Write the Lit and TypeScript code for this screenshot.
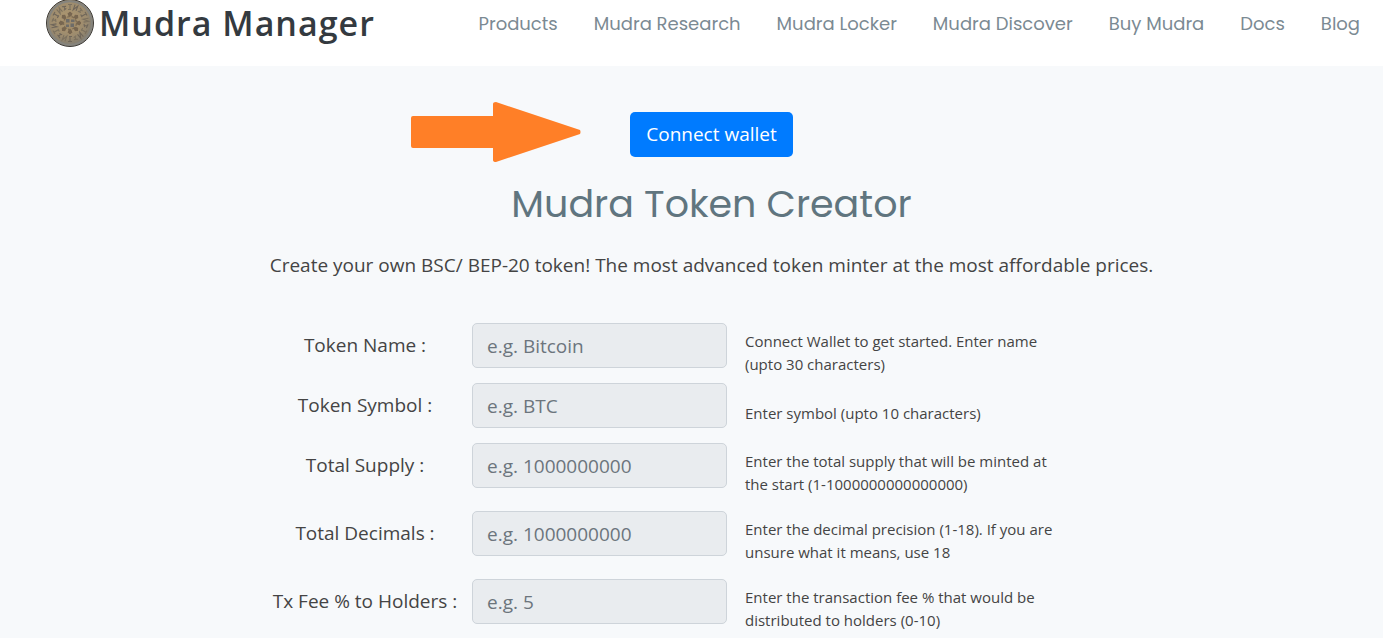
import { LitElement, html, css, svg } from "lit";
import { customElement } from "lit/decorators.js";

interface Field {
  id: string;
  label: string;
  placeholder: string;
  hint: string;
  spaced?: boolean;
}

const LINKS = ["Products", "Mudra Research", "Mudra Locker", "Mudra Discover", "Buy Mudra", "Docs", "Blog"];

const FIELDS: Field[] = [
  { id: "name", label: "Token Name :", placeholder: "e.g. Bitcoin", hint: "Connect Wallet to get started. Enter name (upto 30 characters)" },
  { id: "symbol", label: "Token Symbol :", placeholder: "e.g. BTC", hint: "Enter symbol (upto 10 characters)" },
  { id: "supply", label: "Total Supply :", placeholder: "e.g. 1000000000", hint: "Enter the total supply that will be minted at the start (1-1000000000000000)", spaced: true },
  { id: "decimals", label: "Total Decimals :", placeholder: "e.g. 1000000000", hint: "Enter the decimal precision (1-18). If you are unsure what it means, use 18", spaced: true },
  { id: "fee", label: "Tx Fee % to Holders :", placeholder: "e.g. 5", hint: "Enter the transaction fee % that would be distributed to holders (0-10)", spaced: true },
];

@customElement("mudra-coin")
class MudraCoin extends LitElement {
  static styles = css`
    :host { display: block; flex: none; }
    svg { display: block; }
  `;
  render() {
    const rim = Array.from({ length: 18 }, (_, i) => svg`
      <g transform="rotate(${i * 20} 24 24)">
        <path d=${i % 3 === 0 ? "M22 5.5h4M24 5.5v5M22 10.5h3" : i % 3 === 1 ? "M22.5 5v5.5l3-5v5" : "M22 6l4 1M22.5 10l3-1M24 6v4"}
          fill="none" stroke=${i % 2 ? "#6f665a" : "#7c715f"} stroke-width="1.1" />
      </g>`);
    const petals = Array.from({ length: 8 }, (_, i) => svg`
      <path transform="rotate(${i * 45} 24 24)" d="M21 14.5l3-2.500 3 2.500-1.500 3.500h-3z" fill="#776650" stroke="#ab9672" stroke-width=".8" />`);
    return html`<svg width="48" height="48" viewBox="0 0 48 48" aria-hidden="true">
      <defs>
        <radialGradient id="face" cx="45%" cy="40%" r="65%">
          <stop offset="0" stop-color="#ad9770" />
          <stop offset=".6" stop-color="#9c8b6e" />
          <stop offset="1" stop-color="#77756f" />
        </radialGradient>
      </defs>
      <circle cx="24" cy="24" r="23.5" fill="url(#face)" stroke="#3c3a37" />
      <circle cx="24" cy="24" r="21.8" fill="none" stroke="#85847e" stroke-width="2" />
      ${rim}
      ${petals}
      <circle cx="24" cy="24" r="6.5" fill="#a18c6a" stroke="#7b6a52" stroke-dasharray="3 1.5" stroke-width="1.2" />
      <path d="M20 20h3.500v3.500h-3.500zM25 20.500h3.500v2.500h-3.500zM20 25.500h3v2.500h-3zM24.500 24.500h3.500v3.500h-3.500z" fill="#6e6c68" />
    </svg>`;
  }
}

@customElement("app-root")
class AppRoot extends LitElement {
  static styles = css`
    :host {
      display: block;
      min-height: 100vh;
      overflow: hidden;
      background: #f7f9fb;
      color: #444;
      font-family: "Open Sans", sans-serif;
      font-size: 19px;
      line-height: 29px;
    }
    * { box-sizing: border-box; }
    .bar {
      display: flex;
      align-items: center;
      justify-content: space-between;
      padding: 0 23px 20px 46px;
      height: 66px;
      background: #fff;
    }
    .brand {
      display: flex;
      align-items: center;
      gap: 5px;
      color: #343a40;
      font-size: 34px;
      line-height: 46px;
      font-weight: 600;
      letter-spacing: 1px;
      text-decoration: none;
      white-space: nowrap;
    }
    .links { display: flex; gap: 36px; white-space: nowrap; }
    .link {
      color: #7b8a93;
      font-family: Poppins, Inter, sans-serif;
      font-size: 18px;
      text-decoration: none;
    }
    .page {
      display: flex;
      flex-direction: column;
      align-items: center;
      padding: 46px 0 0 40px;
    }
    .action { position: relative; }
    .arrow { position: absolute; right: 212px; top: -10px; }
    .connect {
      display: block;
      padding: 8px 16px;
      border: 0;
      border-radius: 5px;
      background: #007bff;
      color: #fff;
      font: inherit;
    }
    .title {
      margin: 23px 0 0;
      color: #60757f;
      font-family: Poppins, Inter, sans-serif;
      font-size: 38px;
      line-height: 48px;
      font-weight: 400;
    }
    .lead { margin: 23px 0 43px; text-align: center; }
    .form { width: 100%; max-width: 907px; }
    .row {
      display: grid;
      grid-template-columns: 214px 255px 334px;
      min-height: 60px;
    }
    .spaced { margin-bottom: 8px; }
    .label { padding-top: 8px; text-align: center; }
    .input {
      display: block;
      width: 100%;
      height: 45px;
      padding: 0 14px;
      border: 1px solid #ced4da;
      border-radius: 5px;
      background: #e9ecef;
      font: inherit;
    }
    .input::placeholder { color: #6c757d; opacity: 1; }
    .hint {
      align-self: center;
      margin: 0;
      padding-left: 18px;
      font-size: 15px;
      line-height: 23px;
    }
  `;

  render() {
    return html`
      <header class="bar">
        <a class="brand" href="#"><mudra-coin></mudra-coin>Mudra Manager</a>
        <nav class="links">${LINKS.map((t) => html`<a class="link" href="#">${t}</a>`)}</nav>
      </header>
      <main class="page">
        <div class="action">
          <svg class="arrow" width="170" height="60" viewBox="0 0 170 60" aria-hidden="true">
            <path d="M2 14h80V2q0-2 3-2l84 28q1 2 0 4L85 60q-3 0-3-2V46H2q-2 0-2-2V16q0-2 2-2z" fill="#ff7f27" />
          </svg>
          <button class="connect" type="button">Connect wallet</button>
        </div>
        <h1 class="title">Mudra Token Creator</h1>
        <p class="lead">Create your own BSC/ BEP-20 token! The most advanced token minter at the most affordable prices.</p>
        <form class="form">
          ${FIELDS.map((f) => html`
            <div class="row ${f.spaced ? "spaced" : ""}">
              <label class="label" for=${f.id}>${f.label}</label>
              <div><input class="input" id=${f.id} type="text" placeholder=${f.placeholder} disabled /></div>
              <p class="hint">${f.hint}</p>
            </div>`)}
        </form>
      </main>
    `;
  }
}
